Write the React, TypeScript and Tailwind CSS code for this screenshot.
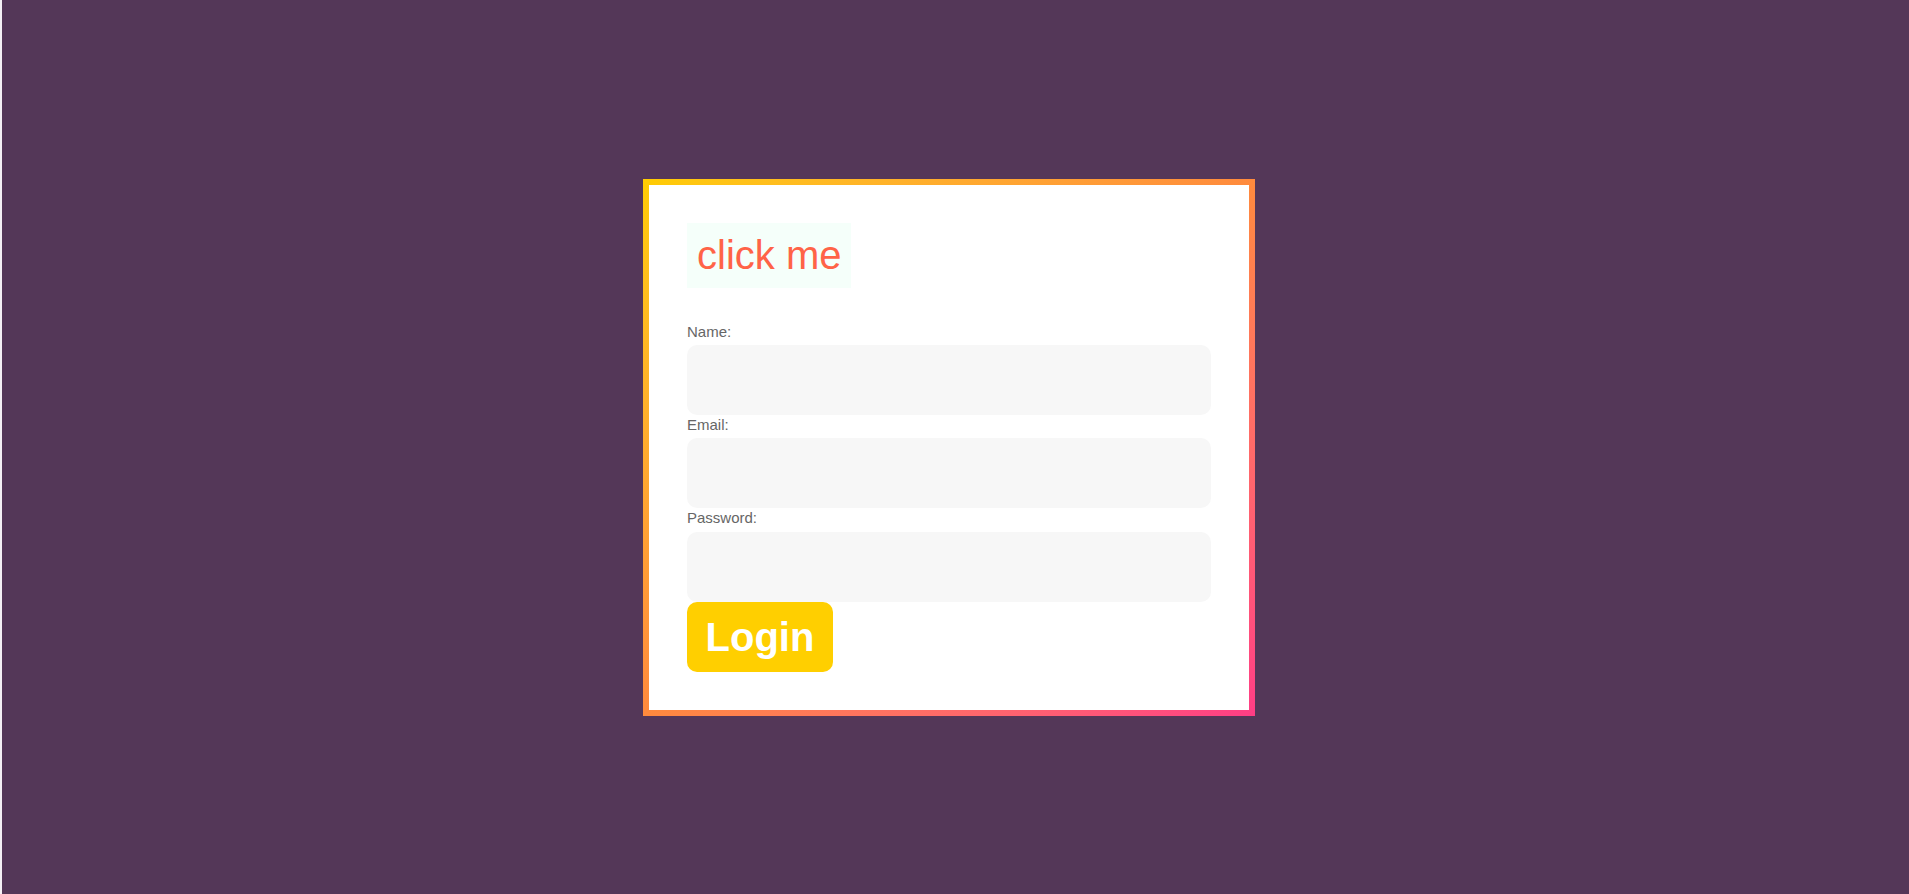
import React from 'react';

const App: React.FC = () => {
  const fields = [
    { label: 'Name:', type: 'text', h: 'h-[23px]' },
    { label: 'Email:', type: 'email', h: 'h-[23px]' },
    { label: 'Password:', type: 'password', h: 'h-[24px]' },
  ];

  return (
    <div
      className="flex h-[894px] w-full items-center justify-center border-l-2 border-[#f4f0f5] bg-[#543758] pr-[13px]"
      style={{ fontFamily: '"Liberation Sans", Arial, sans-serif' }}
    >
      <div className="bg-linear-to-br from-[#ffcc00] via-[#ff8a3d] to-[#ff3d85] p-[6px]">
        <form className="flex w-[600px] flex-col bg-white p-[38px]" onSubmit={(e) => e.preventDefault()}>
          <div className="mb-[34px] self-start bg-[#f5fffa] px-[10px] py-[10px] text-[40px] leading-[45px] text-[#ff6347]">
            click me
          </div>
          {fields.map((f) => (
            <React.Fragment key={f.label}>
              <label className={`block ${f.h} text-[15px] leading-[20px] text-[#666666]`}>{f.label}</label>
              <input
                type={f.type}
                className="block h-[70px] w-full rounded-[10px] bg-[#f7f7f7] px-3 outline-none"
              />
            </React.Fragment>
          ))}
          <button
            type="submit"
            className="h-[70px] w-[146px] rounded-[10px] bg-[#ffcf00] text-[40px] font-bold leading-[46px] text-white"
          >
            Login
          </button>
        </form>
      </div>
    </div>
  );
};

export default App;
